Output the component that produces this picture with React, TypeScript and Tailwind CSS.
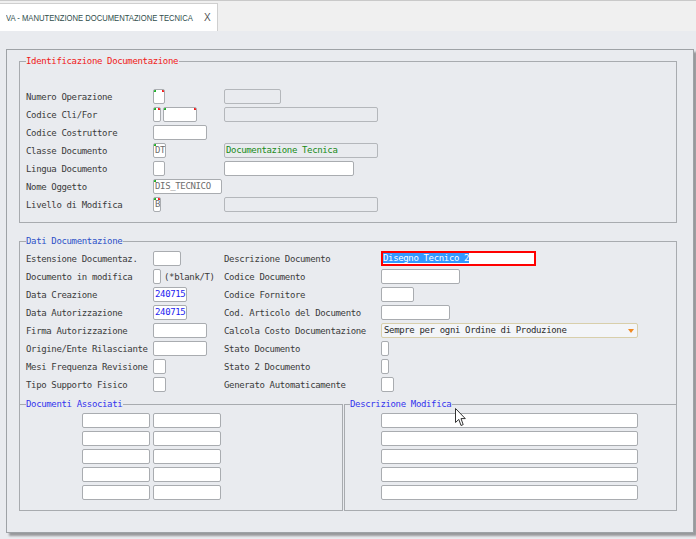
import React from 'react';

const mono = "font-['DejaVu_Sans_Mono',monospace] text-[9px] leading-[12px] tracking-[-0.35px]";

type BoxProps = {
    w: string;
    text?: string;
    tone?: string;
    off?: boolean;
    tl?: boolean;
    tr?: boolean;
};

// single edit field, optional green/red corner marks
function Box({w, text, tone = 'text-[#333]', off, tl, tr}: BoxProps) {
    return (
        <div
            className={`relative h-[15px] shrink-0 rounded-[2px] border px-[1px] leading-[13px] whitespace-nowrap overflow-hidden ${w} ${tone} ${off ? 'bg-transparent border-[#b4b7bb]' : 'bg-white border-[#a9acb0]'}`}>
            {text}
            {tl && <span className="absolute top-0 left-0 w-[2px] h-[2px] bg-[#1fb02a]"></span>}
            {tr && <span className="absolute top-0 right-0 w-[2px] h-[2px] bg-[#f02020]"></span>}
        </div>
    );
}

function Row({label, children, w = 'w-[127px]'}: { label: string; children?: React.ReactNode; w?: string }) {
    return (
        <div className="flex items-center h-[15px]">
            <div className={`${w} shrink-0 text-[#3a3a3a] whitespace-nowrap`}>{label}</div>
            {children}
        </div>
    );
}

export default function App() {
    return (
        <div className={`relative w-[696px] h-[539px] bg-[#e9ebef] overflow-hidden ${mono}`}>

            {/* tab bar */}
            <div className="h-[31px] bg-[#f0f0f0] border-t border-[#c9c9c9] flex items-end">
                <div
                    className="h-[28px] w-[218px] bg-white border-r border-t border-[#cfcfcf] flex items-center pl-[6px]">
                    <div className="w-[198px] whitespace-nowrap">
                        <span
                            className="inline-block origin-left scale-x-[0.78] font-['Liberation_Sans',sans-serif] text-[9.8px] tracking-normal text-[#2f4d4b]">
                            VA - MANUTENZIONE DOCUMENTAZIONE TECNICA
                        </span>
                    </div>
                    <span className="font-['Liberation_Sans',sans-serif] text-[10px] tracking-normal text-[#555]">X</span>
                </div>
            </div>

            {/* main panel */}
            <div
                className="ml-[6px] mt-[18px] w-[688px] h-[484px] border border-[#9ea2a6] shadow-[3px_3px_2px_rgba(0,0,0,0.35)] flex flex-col">

                {/* Identificazione */}
                <fieldset className="ml-[12px] mt-[5px] w-[658px] border border-[#a8abaf] pl-[6px] pt-[22px] pb-[10px]">
                    <legend className="pr-[1px] text-[#f01818]">Identificazione Documentazione</legend>
                    <div className="flex flex-col gap-[3px]">
                        <Row label="Numero Operazione">
                            <div className="w-[71px] flex"><Box w="w-[12px]" tl tr/></div>
                            <Box w="w-[57px]" off/>
                        </Row>
                        <Row label="Codice Cli/For">
                            <div className="w-[71px] flex gap-[2px]"><Box w="w-[8px]" tl tr/><Box w="w-[34px]" tl tr/></div>
                            <Box w="w-[154px]" off/>
                        </Row>
                        <Row label="Codice Costruttore">
                            <Box w="w-[54px]"/>
                        </Row>
                        <Row label="Classe Documento">
                            <div className="w-[71px] flex"><Box w="w-[13px]" text="DT" tone="text-[#6e6e6e]" tl/></div>
                            <Box w="w-[154px]" off text="Documentazione Tecnica" tone="text-[#178a17]"/>
                        </Row>
                        <Row label="Lingua Documento">
                            <div className="w-[71px] flex"><Box w="w-[12px]"/></div>
                            <Box w="w-[130px]"/>
                        </Row>
                        <Row label="Nome Oggetto">
                            <Box w="w-[69px]" text="DIS_TECNICO" tone="text-[#6e6e6e]" tl/>
                        </Row>
                        <Row label="Livello di Modifica">
                            <div className="w-[71px] flex"><Box w="w-[8px]" text="B" tone="text-[#6e6e6e]" tl tr/></div>
                            <Box w="w-[154px]" off/>
                        </Row>
                    </div>
                </fieldset>

                {/* Dati */}
                <fieldset className="ml-[12px] mt-[12px] w-[658px] border border-b-0 border-[#a8abaf] pt-[4px]">
                    <legend className="ml-[6px] pr-[1px] text-[#2c50c8]">Dati Documentazione</legend>
                    <div className="pl-[6px] grid grid-cols-[198px_157px_1fr] gap-y-[3px] items-center">
                        <Row label="Estensione Documentaz."><Box w="w-[28px]"/></Row>
                        <Row label="Descrizione Documento" w="w-[157px]"/>
                        <div
                            className="h-[15px] w-[155px] border-2 border-[#ff0000] bg-white leading-[11px] whitespace-nowrap overflow-hidden">
                            <span className="bg-[#3399ff] text-white">Disegno Tecnico 2</span>
                        </div>

                        <Row label="Documento in modifica">
                            <Box w="w-[8px]"/>
                            <span className="ml-[3px] text-[#3a3a3a] whitespace-nowrap">(*blank/T)</span>
                        </Row>
                        <Row label="Codice Documento" w="w-[157px]"/>
                        <Box w="w-[79px]"/>

                        <Row label="Data Creazione"><Box w="w-[34px]" text="240715" tone="text-[#1c1cf0]"/></Row>
                        <Row label="Codice Fornitore" w="w-[157px]"/>
                        <Box w="w-[33px]"/>

                        <Row label="Data Autorizzazione"><Box w="w-[34px]" text="240715" tone="text-[#1c1cf0]"/></Row>
                        <Row label="Cod. Articolo del Documento" w="w-[157px]"/>
                        <Box w="w-[69px]"/>

                        <Row label="Firma Autorizzazione"><Box w="w-[54px]"/></Row>
                        <Row label="Calcola Costo Documentazione" w="w-[157px]"/>
                        <div
                            className="relative h-[15px] w-[257px] rounded-[2px] border border-[#d8cfab] bg-[#f3f5f8] pl-[2px] leading-[13px] text-[#2a2a2a] whitespace-nowrap">
                            Sempre per ogni Ordine di Produzione
                            <span
                                className="absolute right-[3px] top-[5px] w-0 h-0 border-l-[3px] border-r-[3px] border-t-[4px] border-l-transparent border-r-transparent border-t-[#f08a24]"></span>
                        </div>

                        <Row label="Origine/Ente Rilasciante"><Box w="w-[54px]"/></Row>
                        <Row label="Stato Documento" w="w-[157px]"/>
                        <Box w="w-[8px]"/>

                        <Row label="Mesi Frequenza Revisione"><Box w="w-[13px]"/></Row>
                        <Row label="Stato 2 Documento" w="w-[157px]"/>
                        <Box w="w-[8px]"/>

                        <Row label="Tipo Supporto Fisico"><Box w="w-[13px]"/></Row>
                        <Row label="Generato Automaticamente" w="w-[157px]"/>
                        <Box w="w-[13px]"/>
                    </div>

                    <div className="-mx-px mt-[6px] flex gap-[1px]">
                        <fieldset className="w-[324px] border border-[#a8abaf] pl-[62px] pt-[3px] pb-[10px]">
                            <legend className="-ml-[56px] pr-[1px] text-[#3333ee]">Documenti Associati</legend>
                            <div className="grid grid-cols-[68px_68px] gap-x-[3px] gap-y-[3px]">
                                {Array.from({length: 10}).map((_, i) => (
                                    <Box key={i} w="w-[68px]"/>
                                ))}
                            </div>
                        </fieldset>
                        <fieldset className="w-[333px] border border-[#a8abaf] pl-[36px] pt-[3px] pb-[10px]">
                            <legend className="-ml-[31px] pr-[1px] text-[#3333ee]">Descrizione Modifica</legend>
                            <div className="flex flex-col gap-[3px]">
                                {Array.from({length: 5}).map((_, i) => (
                                    <Box key={i} w="w-[257px]"/>
                                ))}
                            </div>
                        </fieldset>
                    </div>
                </fieldset>
            </div>

            {/* mouse pointer */}
            <svg className="absolute left-[455px] top-[408px]" width="11" height="19" viewBox="0 0 11 19">
                <path d="M0.5 0.5 L0.5 14.5 L3.8 11.4 L6 17.5 L8.2 16.6 L6 10.6 L10.3 10.6 Z" fill="#fff"
                      stroke="#333" strokeWidth="1"/>
            </svg>
        </div>
    );
}
